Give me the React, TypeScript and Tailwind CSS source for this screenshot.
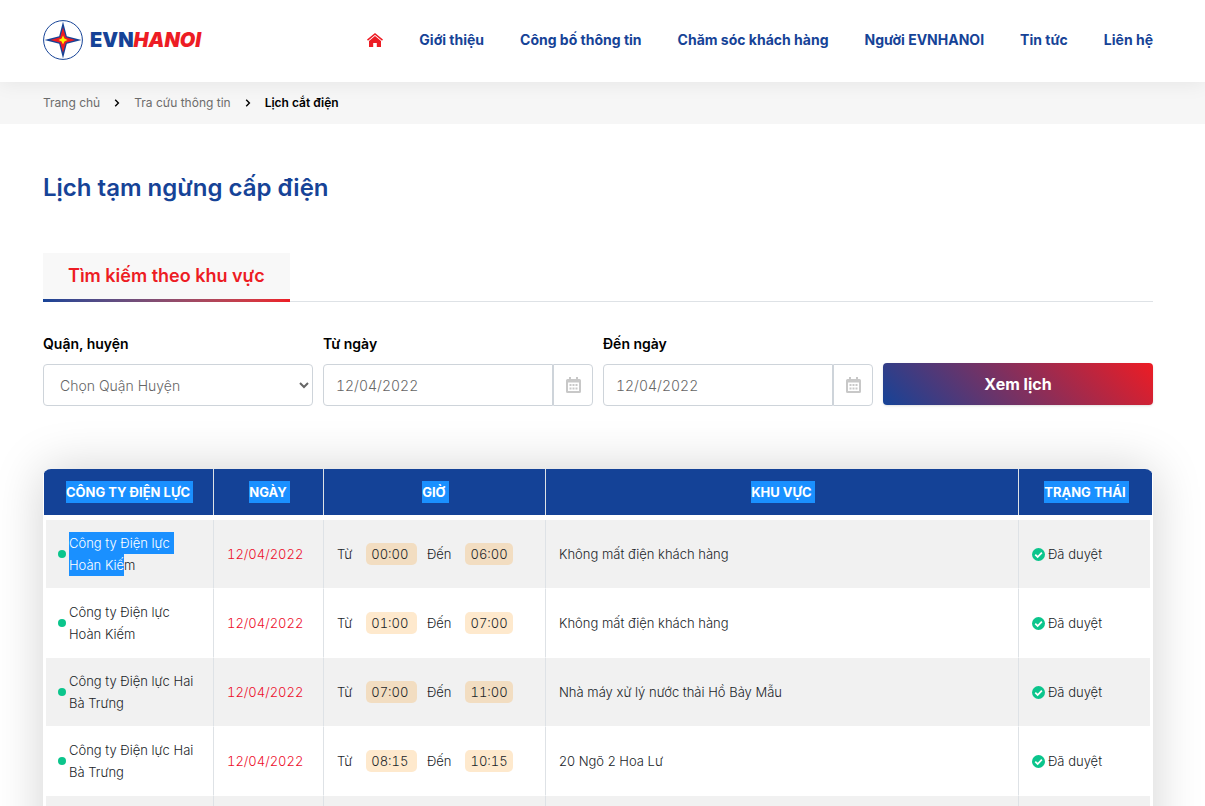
import { useState } from 'react';
import type { ReactNode } from 'react';

interface Outage {
  company: ReactNode;
  date: string;
  from: string;
  to: string;
  area: string;
}

const NAV_ITEMS = [
  'Giới thiệu',
  'Công bố thông tin',
  'Chăm sóc khách hàng',
  'Người EVNHANOI',
  'Tin tức',
  'Liên hệ',
];

const OUTAGES: Outage[] = [
  {
    company: (
      <>
        <Marked>Công ty Điện lực </Marked>
        <br />
        <Marked>Hoàn Kiế</Marked>m
      </>
    ),
    date: '12/04/2022',
    from: '00:00',
    to: '06:00',
    area: 'Không mất điện khách hàng',
  },
  { company: 'Công ty Điện lực Hoàn Kiếm', date: '12/04/2022', from: '01:00', to: '07:00', area: 'Không mất điện khách hàng' },
  { company: 'Công ty Điện lực Hai Bà Trưng', date: '12/04/2022', from: '07:00', to: '11:00', area: 'Nhà máy xử lý nước thải Hồ Bảy Mẫu' },
  { company: 'Công ty Điện lực Hai Bà Trưng', date: '12/04/2022', from: '08:15', to: '10:15', area: '20 Ngõ 2 Hoa Lư' },
  { company: 'Công ty Điện lực Hai Bà Trưng', date: '12/04/2022', from: '08:30', to: '10:30', area: '20 Ngõ 2 Hoa Lư' },
];

function Marked({ children }: { children: ReactNode }) {
  return <span className="inline-block h-[22px] leading-[22px] whitespace-pre bg-[#1a90ff] text-white align-top">{children}</span>;
}

function Logo() {
  return (
    <a href="#" className="flex items-center gap-[7px]">
      <svg width="40" height="40" viewBox="0 0 40 40" aria-hidden="true">
        <circle cx="20" cy="20" r="19.4" fill="#fff" stroke="#164397" strokeWidth="1" />
        <path d="M20 1.5L23.8 16.2L38.5 20L23.8 23.8L20 38.5L16.2 23.8L1.5 20L16.2 16.2Z" fill="#164397" />
        <path d="M20 7.5L22.8 17.2L32.5 20L22.8 22.8L20 32.5L17.2 22.8L7.5 20L17.2 17.2Z" fill="#ed1c24" />
        <path d="M20 15.5L21.4 18.6L24.5 20L21.4 21.4L20 24.5L18.6 21.4L15.5 20L18.6 18.6Z" fill="#fff200" />
      </svg>
      <span className="text-xl leading-7 font-black text-[#164397]">
        EVN<span className="italic text-[#ed1c24]">HANOI</span>
      </span>
    </a>
  );
}

function HomeIcon() {
  return (
    <svg width="16" height="14" viewBox="0 0 16 14" aria-hidden="true">
      <path d="M0.5 7.2L8 1L15.5 7.2" fill="none" stroke="#ed1c24" strokeWidth="1.5" />
      <path d="M8 3L14 8V14H9.8V10H6.2V14H2V8Z" fill="#ed1c24" />
    </svg>
  );
}

function Chevron() {
  return (
    <svg width="6" height="8" viewBox="0 0 6 8" aria-hidden="true">
      <path d="M1.2 0.8L4.4 4L1.2 7.2" fill="none" stroke="#000" strokeWidth="1.4" />
    </svg>
  );
}

function CalendarIcon() {
  return (
    <svg width="15" height="16" viewBox="0 0 15 16" fill="#c8c8c8" aria-hidden="true">
      <path d="M3 0H5V2H10V0H12V2H13.5Q15 2 15 3.5V14.5Q15 16 13.5 16H1.5Q0 16 0 14.5V3.5Q0 2 1.5 2H3ZM2 5.5V14H13V5.5Z" fillRule="evenodd" />
      <path d="M3.5 7H5.5V9H3.5ZM6.5 7H8.5V9H6.5ZM9.5 7H11.5V9H9.5ZM3.5 10.5H5.5V12.5H3.5ZM6.5 10.5H8.5V12.5H6.5ZM9.5 10.5H11.5V12.5H9.5Z" />
    </svg>
  );
}

function CheckIcon() {
  return (
    <svg width="13" height="13" viewBox="0 0 12 12" className="shrink-0" aria-hidden="true">
      <circle cx="6" cy="6" r="6" fill="#0bc58c" />
      <path d="M3 6.2L5.2 8.3L9.1 4.3" fill="none" stroke="#fff" strokeWidth="1.6" />
    </svg>
  );
}

function DateField({ id, label }: { id: string; label: string }) {
  const [value, setValue] = useState('12/04/2022');

  return (
    <div>
      <label htmlFor={id} className="block text-sm leading-5 font-semibold text-black">{label}</label>
      <div className="mt-[10px] flex h-[42px]">
        <input
          id={id}
          value={value}
          onChange={e => setValue(e.target.value)}
          className="min-w-0 flex-1 rounded-l border border-[#ced4da] bg-white px-3 pt-px text-sm font-light tabular-nums text-[#666]"
        />
        <button
          type="button"
          aria-label={label}
          className="flex w-10 items-center justify-center rounded-r border border-[#ced4da] bg-white"
        >
          <CalendarIcon />
        </button>
      </div>
    </div>
  );
}

function HeadCell({ children }: { children: ReactNode }) {
  return (
    <th className="h-[46px] border-r border-[#dee2e6] bg-[#144297] p-0 pl-[2px] text-center text-[13px] font-bold text-white last:border-r-0">
      <Marked>{children} </Marked>
    </th>
  );
}

function Time({ children }: { children: ReactNode }) {
  return (
    <span className="inline-block h-[22px] rounded-[5px] bg-[#f98f04]/20 px-[5px] leading-[22px] tabular-nums whitespace-pre">
      {children}
    </span>
  );
}

function OutageRow({ outage }: { outage: Outage }) {
  return (
    <tr className="odd:bg-[#f1f1f1]">
      <td className="border-r border-b border-l-2 border-r-[#dee2e6] border-b-white border-l-white px-3 py-3">
        <div className="flex items-center gap-[3px]">
          <span className="size-2 shrink-0 rounded-full bg-[#0bc58c]" />
          <div>{outage.company}</div>
        </div>
      </td>
      <td className="border-r border-b border-r-[#dee2e6] border-b-white px-[13px] tabular-nums text-[#ed0e2c]">{outage.date}</td>
      <td className="border-r border-b border-r-[#dee2e6] border-b-white px-[13px]">
        <div className="flex items-center">
          <span className="mr-[14px]">Từ</span>
          <Time>{outage.from} </Time>
          <span className="mr-[14px] ml-[10px]">Đến</span>
          <Time>{outage.to}</Time>
        </div>
      </td>
      <td className="border-r border-b border-r-[#dee2e6] border-b-white px-[13px]">{outage.area}</td>
      <td className="border-r-2 border-b border-white px-[13px]">
        <div className="flex items-center gap-[3px]">
          <CheckIcon />
          Đã duyệt
        </div>
      </td>
    </tr>
  );
}

export default function App() {
  return (
    <div className="h-screen overflow-hidden bg-white font-['Inter',sans-serif] text-[#212529]">
      <header className="relative flex h-[82px] items-center justify-between bg-white pb-[2px] pr-[52px] pl-[43px] shadow-[0_0_20px_rgba(0,0,0,0.08)]">
        <Logo />
        <nav className="flex items-center gap-9 text-sm font-bold text-[#164397]">
          <a href="#" aria-label="Trang chủ"><HomeIcon /></a>
          {NAV_ITEMS.map(item => (
            <a key={item} href="#">{item}</a>
          ))}
        </nav>
      </header>

      <nav className="flex h-[42px] items-center gap-[14px] bg-[#f6f6f6] pl-[43px] text-xs text-[#6c6c6c]">
        <a href="#">Trang chủ</a>
        <Chevron />
        <a href="#">Tra cứu thông tin</a>
        <Chevron />
        <span className="font-semibold text-black">Lịch cắt điện</span>
      </nav>

      <main className="pt-12 pr-[52px] pl-[43px]">
        <h1 className="text-2xl leading-8 font-semibold text-[#164397]">Lịch tạm ngừng cấp điện</h1>

        {/* Tabs */}
        <div className="mt-[49px] flex border-b border-[#dee2e6]">
          <button type="button" className="-mb-px bg-[#f8f8f8] text-lg font-semibold text-[#ed1c24]">
            <span className="block h-[46px] px-[25px] leading-[46px]">Tìm kiếm theo khu vực</span>
            <span className="block h-[3px] bg-linear-to-r from-[#164397] to-[#ed1c24]" />
          </button>
        </div>

        {/* Search form */}
        <form className="mt-8 grid grid-cols-4 gap-[10px]" onSubmit={e => e.preventDefault()}>
          <div>
            <label htmlFor="district" className="block text-sm leading-5 font-semibold text-black">Quận, huyện</label>
            <select
              id="district"
              className="mt-[10px] h-[42px] w-full rounded border border-[#ced4da] bg-white px-3 text-sm font-light text-[#666]"
            >
              <option>Chọn Quận Huyện</option>
            </select>
          </div>
          <DateField id="from-date" label="Từ ngày" />
          <DateField id="to-date" label="Đến ngày" />
          <button
            type="submit"
            className="mb-px h-[42px] self-end rounded bg-linear-[45deg,#164397,#ed1c24] text-base font-bold text-white shadow-sm"
          >
            Xem lịch
          </button>
        </form>

        {/* Outage schedule */}
        <div className="mt-[63px] overflow-hidden rounded-lg bg-white px-px shadow-[0_0_50px_rgba(0,0,0,0.18)]">
          <table className="w-full table-fixed border-separate border-spacing-0 text-[13px] leading-[22px] font-light">
            <colgroup>
              <col className="w-[170px]" />
              <col className="w-[110px]" />
              <col className="w-[222px]" />
              <col />
              <col className="w-[133px]" />
            </colgroup>
            <thead>
              <tr>
                <HeadCell>CÔNG TY ĐIỆN LỰC</HeadCell>
                <HeadCell>NGÀY</HeadCell>
                <HeadCell>GIỜ</HeadCell>
                <HeadCell>KHU VỰC</HeadCell>
                <HeadCell>TRẠNG THÁI</HeadCell>
              </tr>
              <tr aria-hidden="true">
                <td colSpan={5} className="h-[5px] p-0" />
              </tr>
            </thead>
            <tbody>
              {OUTAGES.map((outage, i) => (
                <OutageRow key={i} outage={outage} />
              ))}
            </tbody>
          </table>
        </div>
      </main>
    </div>
  );
}
